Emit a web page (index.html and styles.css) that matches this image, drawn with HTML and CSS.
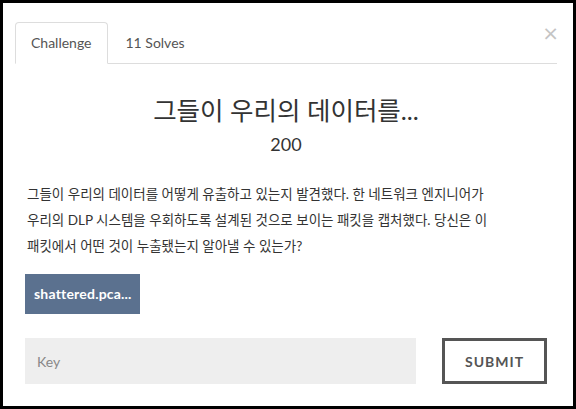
FILE: index.html
```html
<!DOCTYPE html>
<html lang="ko">
<head>
<meta charset="utf-8">
<title>Challenge</title>
<link rel="stylesheet" href="styles.css">
</head>
<body>
<div class="modal">
  <button class="close" type="button" aria-label="Close">&times;</button>
  <ul class="tabs">
    <li class="tab active">Challenge</li>
    <li class="tab">11 Solves</li>
  </ul>
  <div class="body">
    <h2 class="title">그들이 우리의 데이터를...</h2>
    <h3 class="value">200</h3>
    <p class="desc">그들이 우리의 데이터를 어떻게 유출하고 있는지 발견했다. 한 네트워크 엔지니어가 우리의 DLP 시스템을 우회하도록 설계된 것으로 보이는 패킷을 캡처했다. 당신은 이 패킷에서 어떤 것이 누출됐는지 알아낼 수 있는가?</p>
    <div class="files">
      <a class="file" href="#">shattered.pca...</a>
    </div>
    <form class="submit-row">
      <input class="key" type="text" placeholder="Key">
      <button class="submit" type="button">SUBMIT</button>
    </form>
  </div>
</div>
</body>
</html>
```

FILE: styles.css
```css
html, body {
  margin: 0;
  padding: 0;
}
body {
  background: #000;
  padding: 3px;
  font-family: Lato, "Noto Sans CJK KR", sans-serif;
  color: #333;
}
.modal {
  position: relative;
  background: #fff;
  width: 570px;
  height: 403px;
  box-sizing: border-box;
  padding: 19px 16px 0 12px;
}
.close {
  position: absolute;
  top: 20px;
  right: 14px;
  border: 0;
  background: none;
  padding: 0;
  font-family: "DejaVu Sans", sans-serif;
  font-size: 20px;
  line-height: 20px;
  color: #c4c4c4;
  cursor: pointer;
}
.tabs {
  list-style: none;
  margin: 0;
  padding: 0;
  display: flex;
  border-bottom: 1px solid #ddd;
}
.tab {
  padding: 10px 15px;
  line-height: 20px;
  font-size: 14px;
  color: #555;
  border: 1px solid transparent;
  border-radius: 4px 4px 0 0;
  margin-bottom: -1px;
  margin-right: 2px;
}
.tab.active {
  border-color: #ddd #ddd #fff;
  color: #555;
}
.body {
  padding: 0 10px;
}
.title {
  margin: 32px 0 0;
  text-align: center;
  font-weight: 400;
  font-size: 25.5px;
  line-height: 29px;
  color: #333;
}
.value {
  margin: 8px 0 0;
  text-align: center;
  font-weight: 400;
  font-size: 18px;
  line-height: 22px;
  color: #333;
}
.desc {
  margin: 26px 0 0;
  max-width: 480px;
  padding-left: 2px;
  font-size: 13.5px;
  line-height: 26px;
  word-break: keep-all;
  color: #333;
}
.files {
  margin-top: 15px;
  display: flex;
}
.file {
  display: block;
  background: #5b718f;
  color: #fff;
  font-weight: 700;
  font-size: 14px;
  text-decoration: none;
  width: 115px;
  height: 40px;
  line-height: 40px;
  box-sizing: border-box;
  padding-left: 9px;
  letter-spacing: 0.2px;
  white-space: nowrap;
  overflow: hidden;
}
.submit-row {
  margin: 24px 0 0;
  display: flex;
  gap: 26px;
}
.key {
  flex: 1;
  height: 46px;
  box-sizing: border-box;
  border: 0;
  background: #eee;
  padding: 0 12px;
  font-family: Lato, sans-serif;
  font-size: 14px;
  color: #333;
  outline: none;
}
.key::placeholder {
  color: #888;
}
.submit {
  width: 105px;
  height: 46px;
  box-sizing: border-box;
  border: 3px solid #555;
  background: #fff;
  font-family: Lato, sans-serif;
  font-weight: 700;
  font-size: 14px;
  letter-spacing: 1px;
  color: #555;
  padding: 0;
  cursor: pointer;
}
```
